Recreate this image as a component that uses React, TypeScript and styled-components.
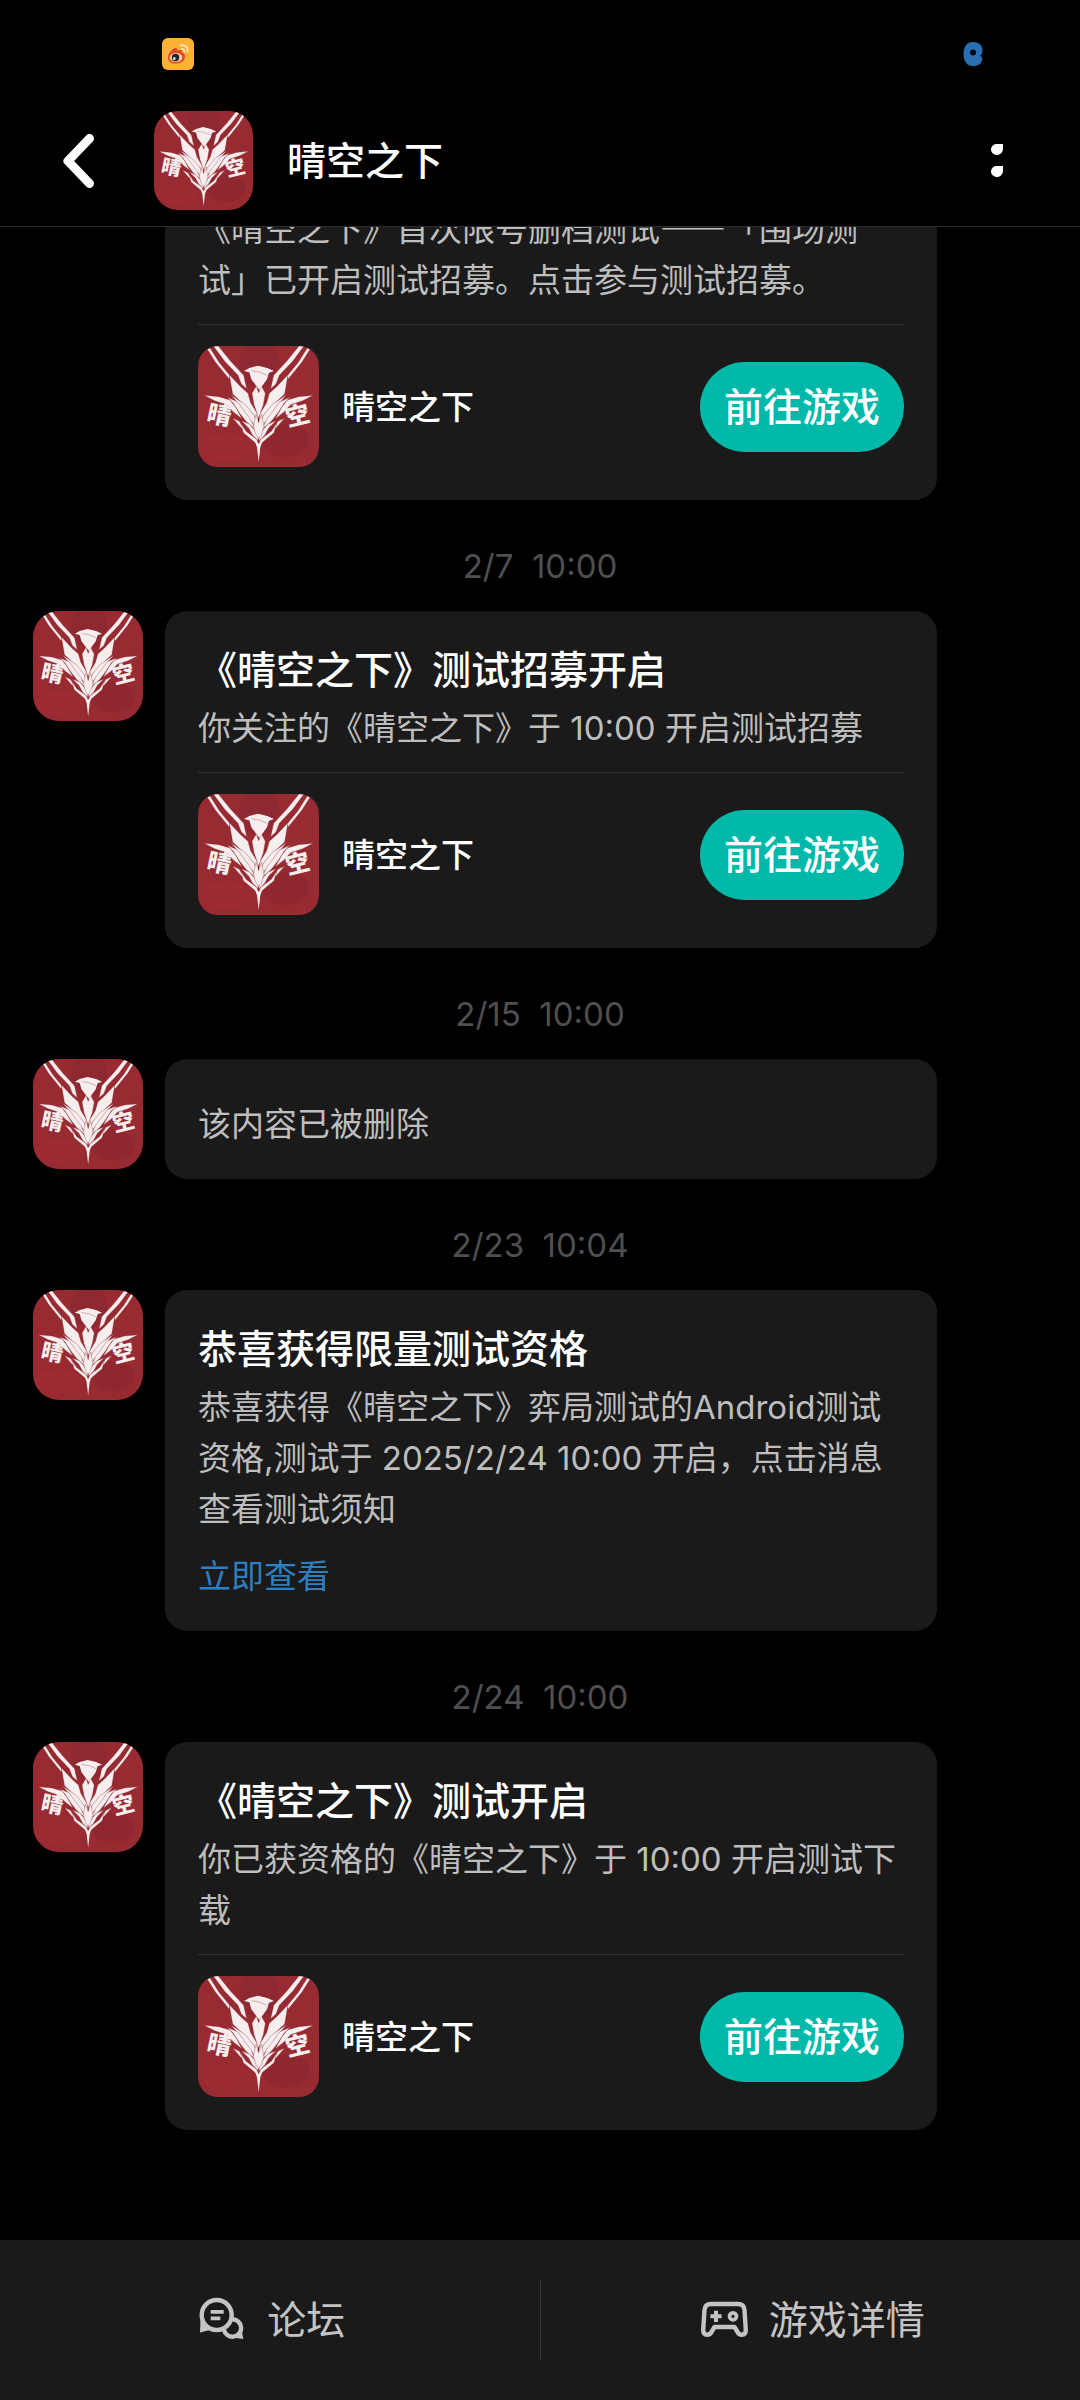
import React from "react";
import styled, { createGlobalStyle } from "styled-components";

const GlobalStyle = createGlobalStyle`
  * {
    box-sizing: border-box;
  }

  body {
    margin: 0;
    background: #000000;
    color: #ffffff;
    font-family: Inter, "Noto Sans CJK SC", sans-serif;
  }

  button {
    border: none;
    padding: 0;
    background: none;
    color: inherit;
    font-family: inherit;
    cursor: pointer;
  }
`;

const Page = styled.div`
  display: flex;
  flex-direction: column;
  height: 100vh;
`;

const StatusBar = styled.div`
  display: flex;
  flex-shrink: 0;
  align-items: center;
  justify-content: space-between;
  height: 95px;
  padding: 13px 97px 0 162px;
`;

const Header = styled.header`
  display: flex;
  flex-shrink: 0;
  align-items: center;
  height: 132px;
  padding: 0 53px 0 48px;
  border-bottom: 1px solid #2c2c2c;
`;

const IconButton = styled.button`
  display: flex;
  align-items: center;
  justify-content: center;
  width: 60px;
  height: 72px;
`;

const HeaderGame = styled.div`
  display: flex;
  flex: 1;
  align-items: center;
  gap: 34px;
  padding-left: 46px;
`;

const HeaderTitle = styled.h1`
  margin: 0;
  font-size: 39px;
  font-weight: 500;
  line-height: 52px;
`;

const LogoSvg = styled.svg<{ size: number; radius: number }>`
  display: block;
  flex-shrink: 0;
  width: ${(props) => props.size}px;
  height: ${(props) => props.size}px;
  border-radius: ${(props) => props.radius}px;
`;

const LogoText = styled.text`
  font-size: 72px;
  font-weight: 900;
  text-anchor: middle;
`;

// newest message stays at the bottom, older ones slide under the header
const MessageList = styled.main`
  display: flex;
  flex: 1;
  flex-direction: column;
  justify-content: flex-end;
  min-height: 0;
  padding-bottom: 110px;
  overflow: hidden;
`;

const MessageTime = styled.time`
  flex-shrink: 0;
  padding: 42px 0 21px;
  color: #4f4f4f;
  font-size: 33px;
  line-height: 48px;
  text-align: center;
  white-space: pre;
`;

const MessageRow = styled.div`
  display: flex;
  flex-shrink: 0;
  align-items: flex-start;
  gap: 22px;
  padding: 0 143px 0 33px;
`;

const AvatarSlot = styled.div`
  flex-shrink: 0;
  width: 110px;
`;

const Card = styled.article`
  flex: 1;
  min-width: 0;
  padding: 33px 33px 29px;
  border-radius: 22px;
  background: #1a1a1a;
`;

const CardTitle = styled.h2`
  margin: 0;
  font-size: 39px;
  font-weight: 500;
  line-height: 52px;
`;

const CardBody = styled.p`
  margin: 7px 0 0;
  color: #bebebe;
  font-size: 33px;
  line-height: 51px;
`;

// keeps the long dash at its full width
const WideDash = styled.span`
  font-family: "Noto Sans CJK SC", sans-serif;
`;

const CardLink = styled.a`
  display: block;
  width: fit-content;
  margin-top: 16px;
  color: #2c7fc0;
  font-size: 33px;
  line-height: 51px;
  text-decoration: none;
`;

const GameRow = styled.div`
  display: flex;
  align-items: center;
  gap: 23px;
  margin-top: 18px;
  padding: 21px 0 4px;
  border-top: 1px solid #333333;
`;

const GameName = styled.span`
  flex: 1;
  font-size: 33px;
  font-weight: 500;
  line-height: 48px;
`;

const GameButton = styled.button`
  height: 90px;
  padding: 0 24px;
  border-radius: 45px;
  background: #00b9a9;
  font-size: 39px;
  font-weight: 500;
  line-height: 52px;
`;

const BottomBar = styled.nav`
  display: flex;
  flex-shrink: 0;
  align-items: center;
  height: 160px;
  background: #1a1a1a;
`;

const BottomItem = styled.button`
  display: flex;
  flex: 1;
  align-items: center;
  justify-content: center;
  gap: 19px;
  height: 100%;
  color: #c4c4c4;
  font-size: 39px;
  line-height: 52px;
`;

const BottomDivider = styled.div`
  width: 1px;
  height: 78px;
  background: #3a3a3a;
`;

const LOGO_WING = [
  "34,16 42,12 70,56 101,94 100,106 58,54",
  "52,6 67,6 104,52 143,94 152,134 136,120 126,94 86,52",
  "100,92 134,128 156,148 164,176 186,212 186,238 172,212 146,184 110,150",
  "104,152 148,182 174,214 187,244 187,274 170,236 150,212 128,180",
  "24,154 68,158 102,168 118,188 138,224 112,204 92,182 56,170",
  "94,160 126,174 144,200 164,226 178,256 150,232 130,206 112,178",
  "136,230 160,240 174,256 187,276 187,290 170,274 158,252",
  "110,222 130,232 146,258 134,250",
  "134,238 150,262 182,286 188,300 180,298 142,266",
];

const WingShape: React.FC = () => (
  <>
    {LOGO_WING.map((points) => (
      <polygon key={points} points={points} />
    ))}
  </>
);

interface GameLogoProps {
  size: number;
  radius: number;
}

const GameLogo: React.FC<GameLogoProps> = ({ size, radius }) => (
  <LogoSvg size={size} radius={radius} viewBox="6 6 363 363" aria-hidden="true">
    <rect x="6" y="6" width="363" height="363" fill="#982a32" />
    <ellipse cx="190" cy="60" rx="60" ry="70" fill="#852730" opacity="0.5" />
    <ellipse cx="270" cy="290" rx="70" ry="50" fill="#7c222b" opacity="0.3" />
    <ellipse cx="90" cy="310" rx="80" ry="40" fill="#a82a35" opacity="0.4" />
    <g fill="#f6eeee" stroke="#8a2830" strokeWidth="1">
      <WingShape />
      <g transform="translate(376 0) scale(-1 1)">
        <WingShape />
      </g>
      <polygon points="168,148 181,126 188,146 196,126 208,148 202,182 188,222 174,182" />
      <polygon points="180,210 188,236 196,210 204,248 196,272 188,284 180,272 172,248" />
    </g>
    <g fill="#f6eeee">
      <polygon points="144,81 160,72 186,65 214,72 234,81 219,86 213,106 190,138 166,106 160,85" />
      <polygon points="176,290 188,300 200,290 193,310 188,354 183,310" />
      <LogoText x="70" y="238" transform="rotate(12 70 212)">
        晴
      </LogoText>
      <LogoText x="304" y="240" transform="rotate(-14 304 212)">
        空
      </LogoText>
    </g>
    <path d="M166 80 L190 84 L214 94" fill="none" stroke="#7c222b" strokeWidth="1" />
  </LogoSvg>
);

const WeiboIcon: React.FC = () => (
  <svg width="32" height="32" viewBox="0 0 32 32" aria-hidden="true">
    <rect width="32" height="32" rx="6" fill="#fdb235" />
    <path
      d="M6 19.5C6 15 11 9.500 14 10c1.500.3 1.400 1.500 1.200 2.400C18 11 20.500 11.500 20 14.500c2 .5 3 2 3 4C23 23 18.500 25.500 14 25.500S6 23.500 6 19.500z"
      fill="#e2492f"
    />
    <ellipse cx="14" cy="19.500" rx="6.300" ry="4.600" fill="#f8cfa0" />
    <circle cx="13.500" cy="19.500" r="3.700" fill="#1d2a26" />
    <circle cx="12.300" cy="20.600" r="1.300" fill="#ffffff" />
    <path
      d="M19 7.500c4-1 7.500 2 6.500 6M19.500 11c2-.4 3.300 1 2.800 2.800"
      fill="none"
      stroke="#fff0cf"
      strokeWidth="1.500"
      strokeLinecap="round"
    />
  </svg>
);

const StatusDotIcon: React.FC = () => (
  <svg width="20" height="26" viewBox="0 0 20 26" aria-hidden="true">
    <path
      d="M10 1c5.500 0 9.500 3 9.500 8 0 3-.5 5-2.500 6 2 .5 2.500 1.500 2.300 3C19 22.500 15.500 25 10 25 4 25 .5 20.500.5 13S4 1 10 1z"
      fill="#2a6fb4"
    />
    <circle cx="10" cy="11.500" r="3" fill="#02060c" />
  </svg>
);

const BackIcon: React.FC = () => (
  <svg width="36" height="60" viewBox="0 0 36 60" aria-hidden="true">
    <path
      d="M29.500 7.500 8 30l21.500 22.500"
      fill="none"
      stroke="#ffffff"
      strokeWidth="9"
      strokeLinecap="round"
      strokeLinejoin="round"
    />
  </svg>
);

const MoreIcon: React.FC = () => (
  <svg width="12" height="34" viewBox="0 0 12 34" fill="#ffffff" aria-hidden="true">
    <path d="M5.500 0H12v4.500C12 8.500 9 11 6 11S0 8.500 0 5.500 2.500 0 5.500 0z" />
    <path d="M5.500 22H12v4.500c0 4-3 6.500-6 6.500s-6-2.500-6-5.500S2.500 22 5.500 22z" />
  </svg>
);

const ForumIcon: React.FC = () => (
  <svg width="54" height="54" viewBox="0 0 54 54" aria-hidden="true">
    <g fill="none" stroke="currentColor" strokeWidth="4.400">
      <path d="M38.500 26.300A8.700 8.700 0 1 1 30 37" />
      <circle cx="22.700" cy="22" r="15" />
      <path d="M16.700 18.800h13M16.700 25.400h9.600" strokeWidth="3.800" />
    </g>
    <path d="M6.500 27 6 39.500 16 37zM47.500 36l1.800 10L38 44.500z" fill="currentColor" />
  </svg>
);

const GamepadIcon: React.FC = () => (
  <svg
    width="54"
    height="54"
    viewBox="0 0 54 54"
    fill="none"
    stroke="currentColor"
    aria-hidden="true"
  >
    <path
      d="M15 11h27q6 0 6.500 6l1.300 20q0 4.700-4 4.700-3 0-4.300-2.700L38.500 34h-20l-3 5q-1.300 2.700-4.300 2.700-4 0-4-4.700L8.500 17q.5-6 6.500-6z"
      strokeWidth="4.400"
      strokeLinejoin="round"
    />
    <path d="M20 17.700v11.200M14.400 23.300h11.200" strokeWidth="4" />
    <circle cx="37" cy="23.300" r="3.500" strokeWidth="3.800" />
  </svg>
);

interface Message {
  time?: string;
  title?: string;
  body: React.ReactNode;
  link?: string;
  game?: string;
  hideAvatar?: boolean;
}

const MESSAGES: Message[] = [
  {
    body: (
      <>
        《晴空之下》首次限号删档测试<WideDash>——</WideDash>「围场测
        <br />
        试」已开启测试招募。点击参与测试招募。
      </>
    ),
    game: "晴空之下",
    hideAvatar: true,
  },
  {
    time: "2/7  10:00",
    title: "《晴空之下》测试招募开启",
    body: "你关注的《晴空之下》于 10:00 开启测试招募",
    game: "晴空之下",
  },
  {
    time: "2/15  10:00",
    body: "该内容已被删除",
  },
  {
    time: "2/23  10:04",
    title: "恭喜获得限量测试资格",
    body: "恭喜获得《晴空之下》弈局测试的Android测试资格,测试于 2025/2/24 10:00 开启，点击消息查看测试须知",
    link: "立即查看",
  },
  {
    time: "2/24  10:00",
    title: "《晴空之下》测试开启",
    body: "你已获资格的《晴空之下》于 10:00 开启测试下载",
    game: "晴空之下",
  },
];

const MessageItem: React.FC<{ message: Message }> = ({ message }) => (
  <>
    {message.time && <MessageTime>{message.time}</MessageTime>}
    <MessageRow>
      <AvatarSlot>
        {!message.hideAvatar && <GameLogo size={110} radius={26} />}
      </AvatarSlot>
      <Card>
        {message.title && <CardTitle>{message.title}</CardTitle>}
        <CardBody>{message.body}</CardBody>
        {message.link && <CardLink href="#notice">{message.link}</CardLink>}
        {message.game && (
          <GameRow>
            <GameLogo size={121} radius={20} />
            <GameName>{message.game}</GameName>
            <GameButton type="button">前往游戏</GameButton>
          </GameRow>
        )}
      </Card>
    </MessageRow>
  </>
);

const App: React.FC = () => (
  <Page lang="zh-CN">
    <GlobalStyle />
    <StatusBar>
      <WeiboIcon />
      <StatusDotIcon />
    </StatusBar>
    <Header>
      <IconButton type="button" aria-label="返回">
        <BackIcon />
      </IconButton>
      <HeaderGame>
        <GameLogo size={99} radius={24} />
        <HeaderTitle>晴空之下</HeaderTitle>
      </HeaderGame>
      <IconButton type="button" aria-label="更多">
        <MoreIcon />
      </IconButton>
    </Header>
    <MessageList>
      {MESSAGES.map((message, index) => (
        <MessageItem key={index} message={message} />
      ))}
    </MessageList>
    <BottomBar>
      <BottomItem type="button">
        <ForumIcon />
        论坛
      </BottomItem>
      <BottomDivider />
      <BottomItem type="button">
        <GamepadIcon />
        游戏详情
      </BottomItem>
    </BottomBar>
  </Page>
);

export default App;
